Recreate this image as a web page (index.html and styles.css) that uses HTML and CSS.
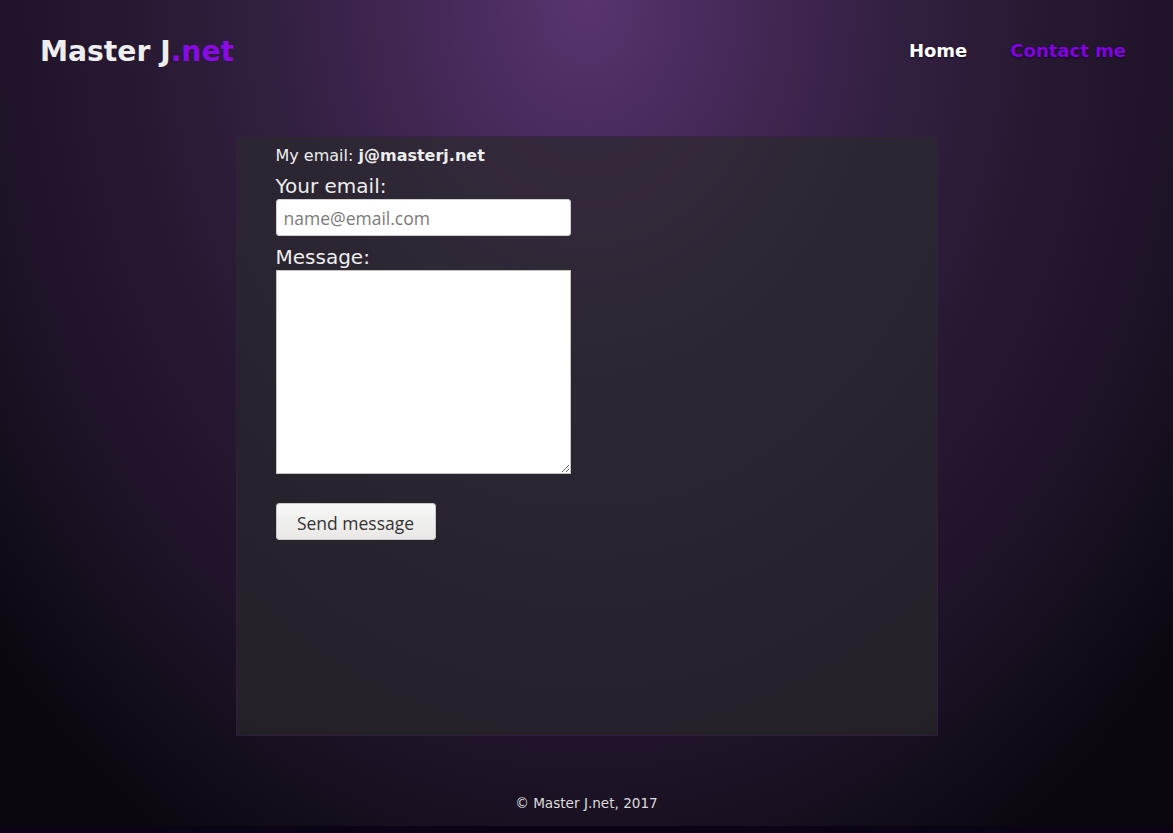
FILE: index.html
```html
<!DOCTYPE html>
<html lang="en">
<head>
<meta charset="utf-8">
<title>Master J.net - Contact</title>
<link rel="stylesheet" href="styles.css">
</head>
<body>
<div class="page">
  <header class="header">
    <div class="logo">Master J<span class="logo-accent">.net</span></div>
    <nav class="nav">
      <a class="nav-link" href="#">Home</a>
      <a class="nav-link nav-active" href="#">Contact me</a>
    </nav>
  </header>
  <main class="panel">
    <p class="my-email">My email: <b>j@masterj.net</b></p>
    <form class="form">
      <label class="label" for="email">Your email:</label>
      <input class="input" id="email" type="email" placeholder="name@email.com">
      <label class="label label-msg" for="msg">Message:</label>
      <textarea class="textarea" id="msg"></textarea>
      <button class="button" type="button">Send message</button>
    </form>
  </main>
  <footer class="footer">© Master J.net, 2017</footer>
</div>
</body>
</html>
```

FILE: styles.css
```css
html {
  background: #0c0317;
}
body {
  margin: 0;
  font-family: "DejaVu Sans", sans-serif;
  color: #eeeeee;
}
.page {
  height: 826px;
  background: radial-gradient(ellipse 780px 1000px at 50% 0, #58346f 0%, #452857 20%, #322040 40%, #261831 60%, #1c1225 80%, #0b070e 100%);
  display: flex;
  flex-direction: column;
}
.header {
  display: flex;
  justify-content: space-between;
  align-items: flex-start;
  padding: 35px 47px 67px 40px;
}
.logo {
  font-size: 28.2px;
  line-height: 34px;
  font-weight: bold;
  color: #eeeeee;
}
.logo-accent {
  color: #8a0ae6;
}
.nav {
  display: flex;
  gap: 43px;
  margin-top: 5px;
}
.nav-link {
  font-size: 18px;
  line-height: 21px;
  font-weight: bold;
  color: #ffffff;
  text-decoration: none;
  text-shadow: 0 1px 2px rgba(0, 0, 0, 0.6);
}
.nav-active {
  color: #8000e0;
}
.panel {
  box-sizing: border-box;
  width: 702px;
  height: 600px;
  margin: 0 auto;
  padding: 9px 39px;
  background: rgba(42, 42, 44, 0.68);
  border: 1px solid rgba(60, 25, 90, 0.5);
}
.my-email {
  margin: 0 0 10px;
  font-size: 16px;
  line-height: 19px;
}
.form {
  display: flex;
  flex-direction: column;
  align-items: flex-start;
}
.label {
  font-size: 20px;
  line-height: 23px;
  margin-bottom: 1px;
}
.label-msg {
  margin-top: 10px;
}
.input {
  box-sizing: border-box;
  width: 295px;
  height: 37px;
  padding: 0 7px;
  border: 1px solid #cfcfcf;
  border-radius: 3px;
  background: #ffffff;
  font-family: "Open Sans", sans-serif;
  font-size: 17.5px;
  color: #333;
}
.input::placeholder {
  color: #7a7a7a;
}
.textarea {
  box-sizing: border-box;
  width: 295px;
  height: 204px;
  margin: 0;
  border: 1px solid #c8c4bc;
  border-radius: 0;
  background: #ffffff;
  font-family: "Open Sans", sans-serif;
}
.button {
  box-sizing: border-box;
  margin-top: 29px;
  width: 160px;
  height: 37px;
  border: 1px solid #c9c9c9;
  border-radius: 3px;
  background: linear-gradient(#f7f7f7, #e9e8e6);
  font-family: "Open Sans", sans-serif;
  font-size: 17.5px;
  color: #333333;
  padding: 2px 0 0;
}
.footer {
  padding-top: 59px;
  text-align: center;
  font-size: 13.6px;
  line-height: 16px;
  color: #dcdcdc;
}
```
